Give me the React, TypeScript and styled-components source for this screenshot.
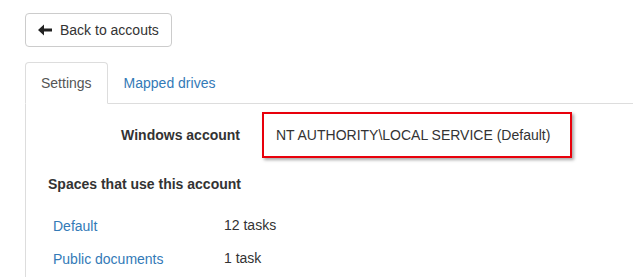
import React from "react";
import styled, { createGlobalStyle } from "styled-components";

const Global = createGlobalStyle`
  html, body { margin: 0; padding: 0; background: #fff; }
  body {
    font-family: "Liberation Sans", Arial, Helvetica, sans-serif;
    font-size: 14px;
    line-height: 20px;
    color: #333;
  }
  * { box-sizing: border-box; }
`;

const Page = styled.div`
  padding: 13px 0 0 25px;
  width: 633px;
  overflow: hidden;
`;

const BackButton = styled.button`
  display: inline-flex;
  align-items: center;
  gap: 8px;
  height: 34px;
  padding: 6px 12px;
  border: 1px solid #ccc;
  border-radius: 4px;
  background: #fff;
  color: #333;
  font: inherit;
  cursor: pointer;
`;

const Tabs = styled.div`
  margin-top: 15px;
`;

const TabList = styled.ul`
  display: flex;
  list-style: none;
  margin: 0;
  padding: 0;
  border-bottom: 1px solid #ddd;
`;

const Tab = styled.li<{ $active?: boolean }>`
  margin-right: 0;
  margin-bottom: -1px;
  padding: 10px 15px;
  line-height: 20px;
  border: 1px solid ${(p) => (p.$active ? "#ddd" : "transparent")};
  border-bottom-color: ${(p) => (p.$active ? "#fff" : "#ddd")};
  border-radius: ${(p) => (p.$active ? "4px 4px 0 0" : "0")};
  background: ${(p) => (p.$active ? "#fff" : "transparent")};
  color: ${(p) => (p.$active ? "#555" : "#337ab7")};
`;

const TabContent = styled.div`
  border-left: 1px solid #ddd;
  padding-top: 8px;
  padding-bottom: 20px;
`;

const FieldRow = styled.div`
  display: grid;
  grid-template-columns: 214px auto;
  column-gap: 22px;
  align-items: center;
`;

const FieldLabel = styled.div`
  text-align: right;
  font-weight: bold;
`;

const Highlight = styled.div`
  width: 310px;
  height: 46px;
  display: flex;
  align-items: center;
  padding-left: 12px;
  border: 2px solid #e8000b;
  box-shadow: 2px 2px 3px rgba(0, 0, 0, 0.35);
  white-space: nowrap;
`;

const SectionTitle = styled.h4`
  margin: 16px 0 0 22px;
  font-size: 14px;
  line-height: 20px;
  font-weight: bold;
  color: #333;
`;

const SpaceList = styled.div`
  margin-top: 22px;
  display: grid;
  grid-template-columns: 171px auto;
  row-gap: 13px;
  padding-left: 27px;
`;

const SpaceLink = styled.a`
  color: #337ab7;
  text-decoration: none;
`;

const SpaceCount = styled.span`
  color: #333;
  margin-top: -1px;
`;

const ArrowLeft = () => (
  <svg width="14" height="12" viewBox="0 0 14 12" aria-hidden="true">
    <path d="M0 6 L6 0.5 L6 4.5 L14 4.5 L14 7.5 L6 7.5 L6 11.5 Z" fill="#222" />
  </svg>
);

const spaces = [
  { name: "Default", count: "12 tasks" },
  { name: "Public documents", count: "1 task" },
];

export default function App() {
  return (
    <Page>
      <Global />
      <BackButton>
        <ArrowLeft />
        Back to accouts
      </BackButton>
      <Tabs>
        <TabList>
          <Tab $active>Settings</Tab>
          <Tab>Mapped drives</Tab>
        </TabList>
        <TabContent>
          <FieldRow>
            <FieldLabel>Windows account</FieldLabel>
            <Highlight>NT AUTHORITY\LOCAL SERVICE (Default)</Highlight>
          </FieldRow>
          <SectionTitle>Spaces that use this account</SectionTitle>
          <SpaceList>
            {spaces.map((s) => (
              <React.Fragment key={s.name}>
                <SpaceLink href="#">{s.name}</SpaceLink>
                <SpaceCount>{s.count}</SpaceCount>
              </React.Fragment>
            ))}
          </SpaceList>
        </TabContent>
      </Tabs>
    </Page>
  );
}
